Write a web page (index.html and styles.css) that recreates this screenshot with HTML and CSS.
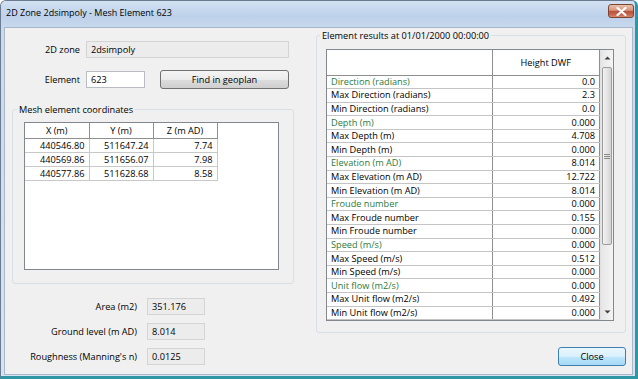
FILE: index.html
```html
<!DOCTYPE html>
<html lang="en">
<head>
  <meta charset="UTF-8" />
  <title>2D Zone 2dsimpoly - Mesh Element 623</title>
  <link rel="stylesheet" href="styles.css">
</head>
<body>

  <div class="window">
    <div class="titlebar">
      <span class="title">2D Zone 2dsimpoly - Mesh Element 623</span>
      <button class="close-x" title="Close">
        <svg width="11" height="9" viewBox="0 0 11 9"><path d="M1.5 1 L9.5 8 M9.5 1 L1.5 8" stroke="#fff" stroke-width="2.2" stroke-linecap="round"/></svg>
      </button>
    </div>

    <div class="client">
      <div class="left">
        <div class="field-row">
          <label class="lbl">2D zone</label>
          <div class="box readonly wide">2dsimpoly</div>
        </div>
        <div class="field-row second">
          <label class="lbl">Element</label>
          <div class="box edit">623</div>
          <button class="btn find">Find in geoplan</button>
        </div>

        <fieldset class="group coords">
          <legend>Mesh element coordinates</legend>
          <div class="listbox">
            <table class="coord-table">
              <tr><th>X (m)</th><th>Y (m)</th><th>Z (m AD)</th></tr>
              <tr><td>440546.80</td><td>511647.24</td><td>7.74</td></tr>
              <tr><td>440569.86</td><td>511656.07</td><td>7.98</td></tr>
              <tr><td>440577.86</td><td>511628.68</td><td>8.58</td></tr>
            </table>
          </div>
        </fieldset>

        <div class="props">
          <div class="prop-row">
            <label class="plbl">Area (m2)</label>
            <div class="box readonly small">351.176</div>
          </div>
          <div class="prop-row">
            <label class="plbl">Ground level (m AD)</label>
            <div class="box readonly small">8.014</div>
          </div>
          <div class="prop-row">
            <label class="plbl">Roughness (Manning's n)</label>
            <div class="box readonly small">0.0125</div>
          </div>
        </div>
      </div>

      <div class="right">
        <fieldset class="group results">
          <legend>Element results at 01/01/2000 00:00:00</legend>
          <div class="grid">
            <table class="result-table">
              <tr class="head"><th class="name"></th><th>Height DWF</th></tr>
              <tr class="main"><td class="name">Direction (radians)</td><td>0.0</td></tr>
              <tr><td class="name">Max Direction (radians)</td><td>2.3</td></tr>
              <tr><td class="name">Min Direction (radians)</td><td>0.0</td></tr>
              <tr class="main"><td class="name">Depth (m)</td><td>0.000</td></tr>
              <tr><td class="name">Max Depth (m)</td><td>4.708</td></tr>
              <tr><td class="name">Min Depth (m)</td><td>0.000</td></tr>
              <tr class="main"><td class="name">Elevation (m AD)</td><td>8.014</td></tr>
              <tr><td class="name">Max Elevation (m AD)</td><td>12.722</td></tr>
              <tr><td class="name">Min Elevation (m AD)</td><td>8.014</td></tr>
              <tr class="main"><td class="name">Froude number</td><td>0.000</td></tr>
              <tr><td class="name">Max Froude number</td><td>0.155</td></tr>
              <tr><td class="name">Min Froude number</td><td>0.000</td></tr>
              <tr class="main"><td class="name">Speed (m/s)</td><td>0.000</td></tr>
              <tr><td class="name">Max Speed (m/s)</td><td>0.512</td></tr>
              <tr><td class="name">Min Speed (m/s)</td><td>0.000</td></tr>
              <tr class="main"><td class="name">Unit flow (m2/s)</td><td>0.000</td></tr>
              <tr><td class="name">Max Unit flow (m2/s)</td><td>0.492</td></tr>
              <tr><td class="name">Min Unit flow (m2/s)</td><td>0.000</td></tr>
            </table>
            <div class="scrollbar">
              <div class="arrow">
                <svg width="7" height="4" viewBox="0 0 7 4"><path d="M0.5 3.5 L3.5 0.5 L6.5 3.5 Z" fill="#404040"/></svg>
              </div>
              <div class="track">
                <div class="thumb">
                  <svg width="6" height="5" viewBox="0 0 6 5"><path d="M0 0.5 H6 M0 2.5 H6 M0 4.5 H6" stroke="#8a8a8a" stroke-width="1"/></svg>
                </div>
              </div>
              <div class="arrow">
                <svg width="7" height="4" viewBox="0 0 7 4"><path d="M0.5 0.5 L3.5 3.5 L6.5 0.5 Z" fill="#404040"/></svg>
              </div>
            </div>
          </div>
        </fieldset>

        <div class="actions">
          <button class="btn default">Close</button>
        </div>
      </div>
    </div>
  </div>

</body>
</html>
```

FILE: styles.css
```css
* {
  box-sizing: border-box;
}

body {
  margin: 0;
  font-family: "Open Sans", "Noto Sans", sans-serif;
  font-size: 9.2px;
  color: #000;
  background: #fff;
}

.window {
  width: 638px;
  height: 379px;
  display: flex;
  flex-direction: column;
  background: linear-gradient(#c9d9ec, #d7e3f1);
  border: 1px solid #6b7c92;
  border-right: 3px solid #2f96a3;
  border-bottom: 3px solid #2f96a3;
  border-radius: 6px 6px 0 0;
  overflow: hidden;
}

/* title bar */
.titlebar {
  height: 26px;
  display: flex;
  justify-content: space-between;
  align-items: flex-start;
  padding: 3px 1px 0 5px;
  background: linear-gradient(#d3e1f2, #bdd1ea 60%, #c6d8ed);
}

.title {
  font-size: 9px;
  line-height: 14px;
  margin-top: 2px;
}

.close-x {
  width: 26px;
  height: 14px;
  padding: 0;
  display: flex;
  align-items: center;
  justify-content: center;
  border: 1px solid #7a4535;
  border-radius: 3px;
  background: linear-gradient(#e8c0aa, #d9957c 45%, #b8503a 50%, #c8664e 80%, #d98a6e);
}

/* client area */
.client {
  flex: 1;
  display: flex;
  margin: 0 2px 1px 3px;
  background: #f0f0f0;
  border: 1px solid #a8b7ca;
}

.left {
  width: 300px;
  padding-top: 13px;
}

.field-row {
  display: flex;
  align-items: center;
  height: 17px;
}

.field-row.second {
  height: 19px;
  margin-top: 12px;
}

.lbl {
  width: 75px;
  text-align: right;
  margin-right: 6px;
}

.box {
  height: 17px;
  line-height: 15px;
  padding: 0 4px;
  border: 1px solid #c9c9c9;
}

.box.readonly {
  background: #ececec;
  border-color: #d4d4d4;
}

.box.edit {
  width: 59px;
  background: #fff;
  border-color: #b9bcc3;
}

.box.wide {
  width: 203px;
}

.box.small {
  width: 58px;
}

.btn {
  font-family: inherit;
  font-size: inherit;
  color: #000;
  padding: 0;
  border: 1px solid #707070;
  border-radius: 3px;
  background: linear-gradient(#f4f4f4, #ebebeb 50%, #dddddd 51%, #cfcfcf);
}

.btn.find {
  width: 129px;
  height: 19px;
  margin-left: 15px;
}

/* group boxes */
.group {
  margin: 0;
  border: 1px solid #d5dfe5;
  border-radius: 3px;
  min-width: 0;
}

.group legend {
  padding: 0 2px;
  line-height: 13px;
}

.coords {
  width: 282px;
  height: 181px;
  margin: 14px 0 0 7px;
  padding: 6px 14px 11px 11px;
}

.coords legend {
  margin-left: -7px;
}

.listbox {
  height: 148px;
  background: #fff;
  border: 1px solid #828790;
}

.coord-table {
  border-collapse: collapse;
}

.coord-table th {
  width: 64px;
  height: 15px;
  font-weight: normal;
  border: 1px solid #8e8f8f;
  border-top: 0;
  border-left: 0;
  background: #fff;
}

.coord-table td {
  height: 14px;
  text-align: right;
  padding: 0 4px;
  border-right: 1px solid #c8c8c8;
  border-bottom: 1px solid #c8c8c8;
}

/* area / ground / roughness */
.props {
  margin-top: 14px;
  display: flex;
  flex-direction: column;
  gap: 8px;
}

.prop-row {
  display: flex;
  align-items: center;
}

.plbl {
  width: 132px;
  text-align: right;
  margin-right: 10px;
}

/* right column */
.right {
  flex: 1;
  display: flex;
  flex-direction: column;
  padding: 1px 6px 0 11px;
}

.results {
  height: 304px;
  padding: 7px 11px 11px 9px;
}

.results legend {
  margin-left: -6px;
}

.grid {
  display: flex;
  height: 272px;
  border: 1px solid #828790;
  background: #fff;
  overflow: hidden;
}

.result-table {
  border-collapse: collapse;
  width: 273px;
}

.result-table th {
  height: 25px;
  font-weight: normal;
  border-right: 1px solid #8e8f8f;
  border-bottom: 1px solid #8e8f8f;
}

.result-table td {
  height: 13.6px;
  padding: 0 4px;
  text-align: right;
  line-height: 12px;
  border-bottom: 1px solid #c4c4c4;
  border-right: 1px solid #8e8f8f;
}

.result-table .name {
  width: 165px;
  text-align: left;
}

.result-table tr.main .name {
  color: #2c7a3c;
}

.scrollbar {
  width: 13px;
  flex-shrink: 0;
  display: flex;
  flex-direction: column;
  background: linear-gradient(90deg, #e6e6e6, #f4f4f4);
  border-left: 1px solid #e0e0e0;
}

.arrow {
  height: 16px;
  display: flex;
  align-items: center;
  justify-content: center;
}

.track {
  flex: 1;
}

.thumb {
  height: 178px;
  margin: 1px 1px 0 1px;
  display: flex;
  align-items: center;
  justify-content: center;
  border: 1px solid #9b9b9b;
  border-radius: 2px;
  background: linear-gradient(90deg, #f3f3f3, #e4e4e4 50%, #d4d4d4);
}

.actions {
  display: flex;
  justify-content: flex-end;
  margin-top: 14px;
}

.btn.default {
  width: 68px;
  height: 19px;
  border-color: #3c7fb1;
  background: linear-gradient(#eaf6fd, #d9f0fc 50%, #bee6fd 51%, #a7d9f5);
}
```
